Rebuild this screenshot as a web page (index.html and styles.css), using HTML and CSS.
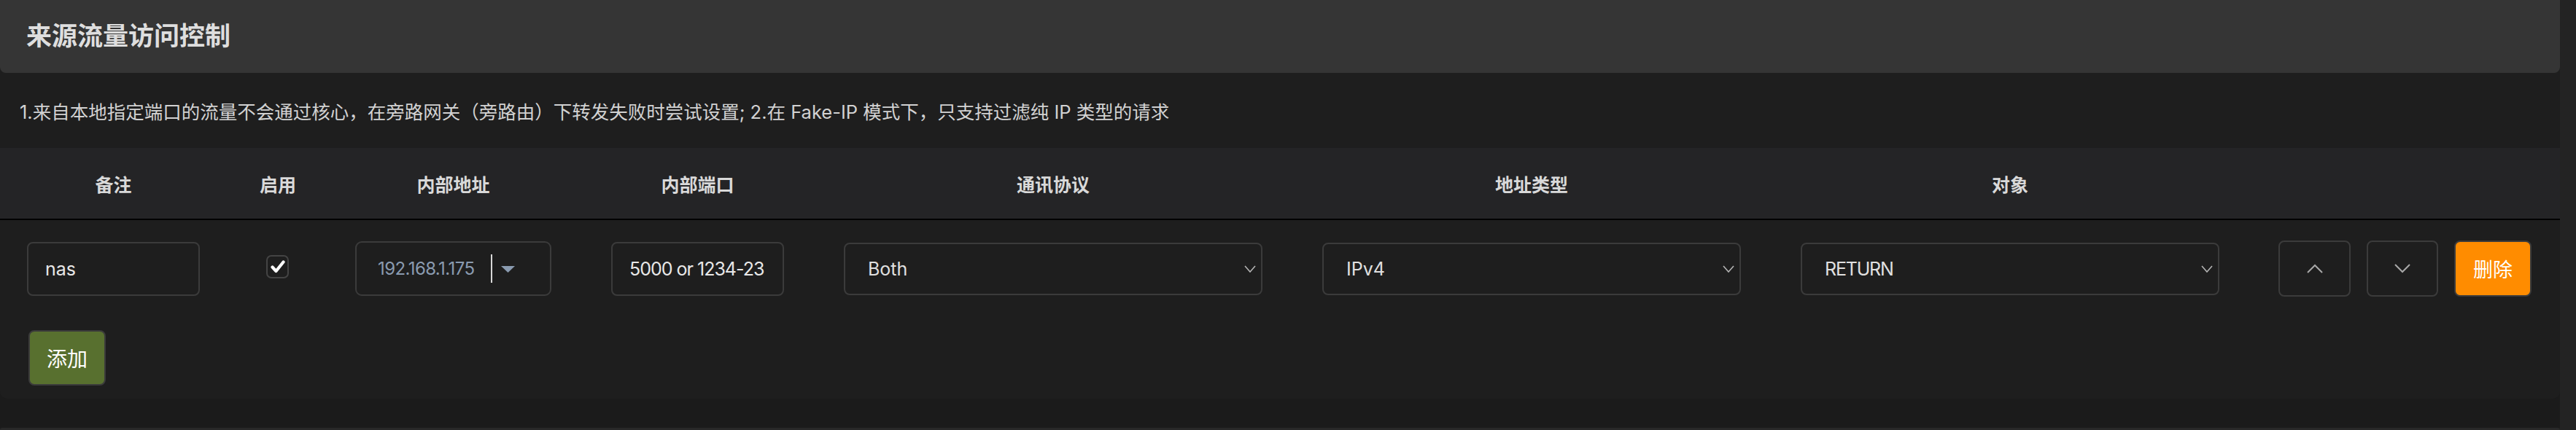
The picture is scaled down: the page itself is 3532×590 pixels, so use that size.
FILE: index.html
```html
<!DOCTYPE html>
<html lang="zh-CN">
<head>
<meta charset="utf-8">
<title>来源流量访问控制</title>
<link rel="stylesheet" href="styles.css">
</head>
<body>
<div class="page">
  <section class="card">
    <h3 class="card-title">来源流量访问控制</h3>
    <div class="note">1.来自本地指定端口的流量不会通过核心，在旁路网关（旁路由）下转发失败时尝试设置; 2.在 Fake-IP 模式下，只支持过滤纯 IP 类型的请求</div>
    <table class="grid">
      <colgroup>
        <col class="c1"><col class="c2"><col class="c3"><col class="c4"><col class="c5"><col class="c6"><col class="c7"><col class="c8">
      </colgroup>
      <thead>
        <tr>
          <th class="first">备注</th>
          <th>启用</th>
          <th>内部地址</th>
          <th>内部端口</th>
          <th>通讯协议</th>
          <th>地址类型</th>
          <th>对象</th>
          <th class="last"></th>
        </tr>
      </thead>
      <tbody>
        <tr>
          <td class="first"><input class="field" type="text" value="nas"></td>
          <td class="center">
            <span class="check">
              <svg width="20" height="18" viewBox="0 0 20 18"><polyline points="2.5,9.5 7.5,15 17.5,2.5" fill="none" stroke="#ffffff" stroke-width="4.2" stroke-linecap="round" stroke-linejoin="round"/></svg>
            </span>
          </td>
          <td>
            <div class="combo">
              <span class="combo-text">192.168.1.175</span>
              <span class="combo-sep"></span>
              <svg class="combo-caret" width="19" height="9" viewBox="0 0 19 9"><polygon points="0,0 19,0 9.5,9" fill="#8a9bb0"/></svg>
            </div>
          </td>
          <td><input class="field port" type="text" value="5000 or 1234-23"></td>
          <td>
            <div class="select"><span>Both</span>
              <svg width="16" height="10" viewBox="0 0 16 10"><polyline points="1,1 8,9 15,1" fill="none" stroke="#b4b4b4" stroke-width="1.6"/></svg>
            </div>
          </td>
          <td>
            <div class="select"><span>IPv4</span>
              <svg width="16" height="10" viewBox="0 0 16 10"><polyline points="1,1 8,9 15,1" fill="none" stroke="#b4b4b4" stroke-width="1.6"/></svg>
            </div>
          </td>
          <td>
            <div class="select"><span class="caps">RETURN</span>
              <svg width="16" height="10" viewBox="0 0 16 10"><polyline points="1,1 8,9 15,1" fill="none" stroke="#b4b4b4" stroke-width="1.6"/></svg>
            </div>
          </td>
          <td class="last">
            <div class="actions">
              <button class="btn move up" type="button">
                <svg width="22" height="13" viewBox="0 0 22 13"><polyline points="1,12 11,2 21,12" fill="none" stroke="#a8a8a8" stroke-width="2"/></svg>
              </button>
              <button class="btn move down" type="button">
                <svg width="22" height="13" viewBox="0 0 22 13"><polyline points="1,1 11,11 21,1" fill="none" stroke="#a8a8a8" stroke-width="2"/></svg>
              </button>
              <button class="btn remove" type="button">删除</button>
            </div>
          </td>
        </tr>
      </tbody>
    </table>
    <div class="add-row">
      <button class="btn add" type="button">添加</button>
    </div>
  </section>
  <section class="card next"></section>
</div>
</body>
</html>
```

FILE: styles.css
```css
html, body {
  margin: 0;
  padding: 0;
}

body {
  background: #232323;
  font-family: Inter, "Noto Sans CJK SC", "Liberation Sans", sans-serif;
  color: #d8d8d8;
  width: 3532px;
  height: 590px;
  overflow: hidden;
}

.page {
  width: 3510px;
  height: 590px;
  background: #1b1b1b;
  display: flex;
  flex-direction: column;
  gap: 40px;
  overflow: hidden;
}

.card {
  background: #1e1e1e;
  border-radius: 0 0 10px 10px;
}

.card.next {
  background: #292929;
  border-radius: 10px 10px 0 0;
  flex: 1;
}

.card-title {
  margin: 0;
  height: 100px;
  box-sizing: border-box;
  padding: 0 0 8px 36px;
  display: flex;
  align-items: center;
  background: #353535;
  border-radius: 0 0 8px 8px;
  color: #dedede;
  font-size: 35px;
  font-weight: 700;
}

.note {
  height: 103px;
  box-sizing: border-box;
  padding: 0 0 0 27px;
  display: flex;
  align-items: center;
  font-size: 25.5px;
  color: #d2d2d2;
}

.grid {
  width: 3510px;
  table-layout: fixed;
  border-collapse: collapse;
  border-spacing: 0;
}

.c1 { width: 315px; }
.c2 { width: 131px; }
.c3 { width: 351px; }
.c4 { width: 319px; }
.c5 { width: 656px; }
.c6 { width: 656px; }
.c7 { width: 656px; }
.c8 { width: 426px; }

.grid th {
  height: 97px;
  padding: 0 41px;
  background: #242426;
  border-bottom: 2px solid #000;
  color: #d9d9d9;
  font-size: 25px;
  font-weight: 700;
  text-align: center;
  vertical-align: middle;
  white-space: nowrap;
}

.grid td {
  padding: 28px 41px 28px 41px;
  vertical-align: middle;
}

.grid .first {
  padding-left: 37px;
}

.grid .last {
  padding-left: 40px;
  padding-right: 39px;
}

.grid td.center {
  text-align: center;
}

.field {
  display: block;
  width: 100%;
  height: 74px;
  box-sizing: border-box;
  margin: 0;
  padding: 0 0 0 23px;
  background: #1e1e1e;
  border: 2px solid #3b3b3b;
  border-radius: 8px;
  color: #e8e8e8;
  font-family: inherit;
  font-size: 25px;
  outline: none;
}

.field.port {
  letter-spacing: -1px;
}

.check {
  display: inline-flex;
  align-items: center;
  justify-content: center;
  width: 31px;
  height: 32px;
  box-sizing: border-box;
  border: 2px solid #444;
  border-radius: 7px;
  background: #1e1e1e;
  vertical-align: middle;
  position: relative;
  top: -3px;
}

.combo {
  display: flex;
  align-items: center;
  height: 75px;
  box-sizing: border-box;
  padding-left: 29px;
  border: 2px solid #3b3b3b;
  border-radius: 9px;
  background: #1e1e1e;
}

.combo-text {
  color: #8a9bb0;
  font-size: 24px;
  letter-spacing: -0.6px;
}

.combo-sep {
  width: 2px;
  height: 39px;
  margin-left: 23px;
  background: #d8d8d8;
}

.combo-caret {
  margin-left: 12px;
  margin-top: 2px;
}

.select {
  display: flex;
  align-items: center;
  justify-content: space-between;
  height: 72px;
  box-sizing: border-box;
  padding: 0 7px 0 31px;
  border: 2px solid #3b3b3b;
  border-radius: 8px;
  background: #1e1e1e;
  color: #e0e0e0;
  font-size: 25px;
}

.select .caps {
  letter-spacing: -1.2px;
}

.actions {
  display: flex;
  gap: 22px;
}

.btn {
  display: flex;
  align-items: center;
  justify-content: center;
  height: 77px;
  box-sizing: border-box;
  margin: 0;
  padding: 0;
  border: 2px solid #3b3b3b;
  border-radius: 8px;
  font-family: inherit;
  font-size: 27px;
  color: #ffffff;
  cursor: pointer;
}

.btn.move {
  background: #1e1e1e;
}

.btn.up {
  width: 99px;
}

.btn.down {
  width: 98px;
}

.btn.remove {
  width: 106px;
  background: #ff8c00;
}

.add-row {
  padding: 18px 0 18px 39px;
}

.btn.add {
  width: 106px;
  height: 76px;
  background: #58702f;
  font-size: 28px;
}
```
